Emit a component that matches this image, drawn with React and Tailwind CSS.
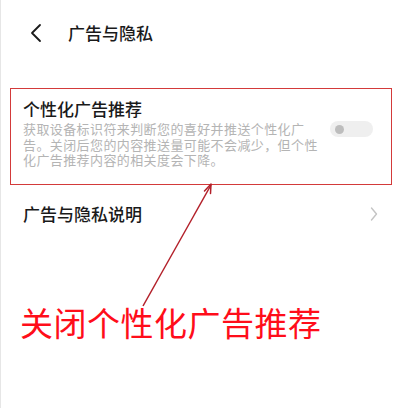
import React from 'react';

// 广告与隐私 设置页 + 红色标注

function BackIcon() {
  return (
    <svg width="12" height="20" viewBox="0 0 12 20" fill="none">
      <path d="M10 2 L2 10 L10 18" stroke="#1a1a1a" strokeWidth="1.8" strokeLinecap="round" strokeLinejoin="round" />
    </svg>
  );
}

function Chevron() {
  return (
    <svg width="8" height="16" viewBox="0 0 8 16" fill="none">
      <path d="M1.5 2 L6.5 8 L1.5 14" stroke="#c4c4c4" strokeWidth="1.4" strokeLinecap="round" strokeLinejoin="round" />
    </svg>
  );
}

export default function App() {
  return (
    <div
      className="relative w-[400px] h-[408px] bg-white overflow-hidden border-l border-[#e6e6e6]"
      style={{ fontFamily: '"Noto Sans CJK SC", "Noto Sans", sans-serif' }}
    >
      {/* Header */}
      <div className="flex items-center h-[66px] pl-[29px]">
        <BackIcon />
        <span className="ml-[26px] text-[17px] text-[#1a1a1a] font-medium">广告与隐私</span>
      </div>

      {/* 个性化广告推荐（红框） */}
      <div className="mt-[22px] ml-[9px] mr-[8px] border-[1.5px] border-[#d33a3a] pl-[12px] pr-[18px] pt-[8px] pb-[16px]">
        <div className="text-[17px] leading-[24px] text-[#1a1a1a] font-medium">个性化广告推荐</div>
        <div className="flex items-start">
          <p className="w-[298px] text-[13px] leading-[15.5px] tracking-[0.4px] text-[#b4b4b4]">
            获取设备标识符来判断您的喜好并推送个性化广告。关闭后您的内容推送量可能不会减少，但个性化广告推荐内容的相关度会下降。
          </p>
          <div className="ml-auto mt-[0px] w-[43px] h-[16px] rounded-full bg-[#efefef] flex items-center pl-[5px]">
            <div className="w-[9px] h-[9px] rounded-full bg-[#bdbdbd]" />
          </div>
        </div>
      </div>

      {/* 广告与隐私说明 */}
      <div className="flex items-center justify-between pl-[22px] pr-[22px] mt-[17px] h-[24px]">
        <span className="text-[17px] text-[#1a1a1a] font-medium">广告与隐私说明</span>
        <Chevron />
      </div>

      {/* 标注文字 */}
      <div className="mt-[76px] pl-[19px] text-[33px] leading-[40px] text-[#ff0d1a] tracking-[0.5px]">
        关闭个性化广告推荐
      </div>

      {/* 标注箭头 */}
      <svg className="absolute left-0 top-0 pointer-events-none" width="400" height="408">
        <line x1="142" y1="306" x2="210" y2="185" stroke="#b3202a" strokeWidth="1.5" />
        <path d="M210 184 L203.5 191 M210 184 L209.5 193.5" stroke="#b3202a" strokeWidth="1.5" strokeLinecap="round" />
      </svg>
    </div>
  );
}
